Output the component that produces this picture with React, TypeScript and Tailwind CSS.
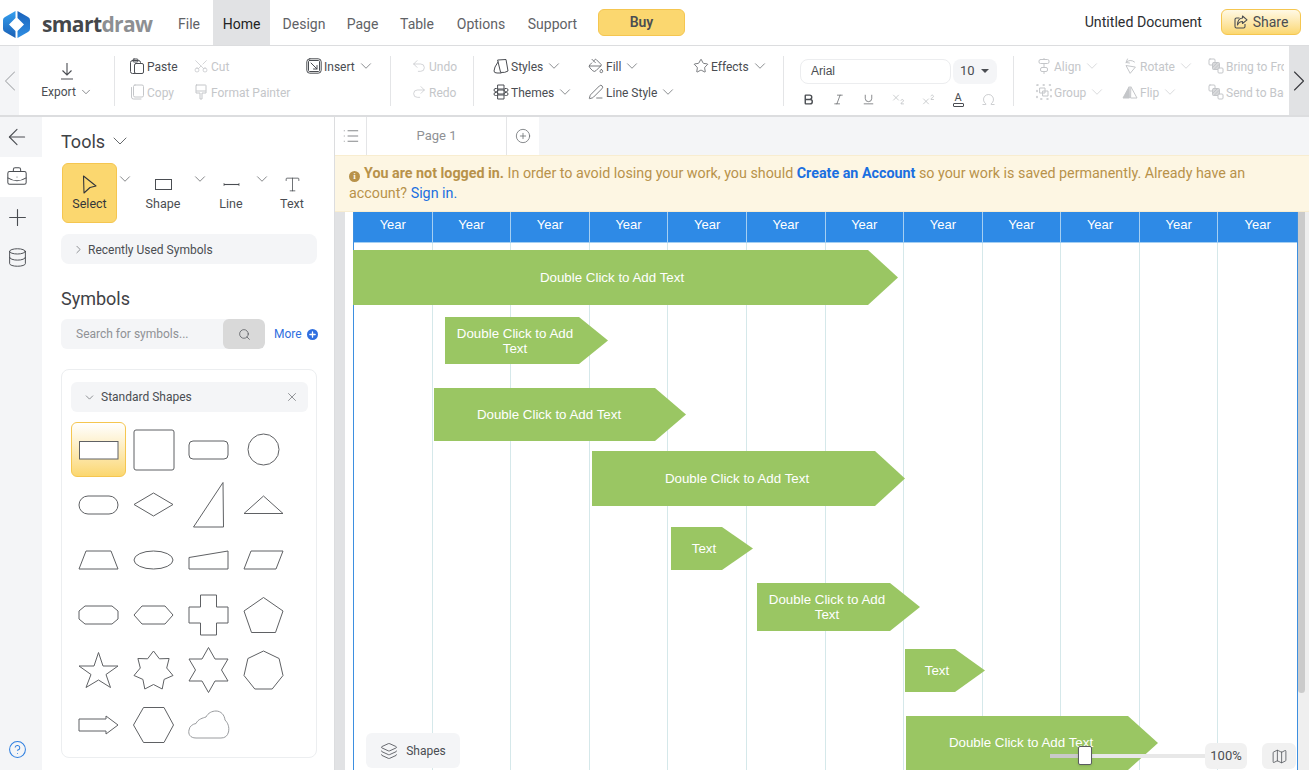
import type { ReactNode } from 'react';
import { ChevronDown, ChevronLeft, ChevronRight, Scissors, Undo2, Redo2, PaintBucket, Star, PenLine, Bold, Italic, Underline, Subscript, Superscript, Omega, ArrowLeft, BriefcaseBusiness, Plus, Database, CircleHelp, Type, Search, X, List, CirclePlus, Layers, Map } from 'lucide-react';

const font = { fontFamily: 'Roboto, sans-serif' };
const arial = { fontFamily: '"Liberation Sans", sans-serif' };

const menus = [
  { label: 'File', w: 'w-[48px]' },
  { label: 'Home', w: 'w-[57px]' },
  { label: 'Design', w: 'w-[68px]' },
  { label: 'Page', w: 'w-[49px]' },
  { label: 'Table', w: 'w-[60px]' },
  { label: 'Options', w: 'w-[68px]' },
  { label: 'Support', w: 'w-[75px]' },
];

function Logo() {
  return (
    <svg width="27" height="27" viewBox="0 0 27 27" className="shrink-0">
      <defs>
        <linearGradient id="logoLeft" x1="0" y1="0" x2="0" y2="1">
          <stop offset="0" stopColor="#35a0f0" />
          <stop offset="1" stopColor="#1a5fb4" />
        </linearGradient>
        <linearGradient id="logoRight" x1="0" y1="0" x2="0" y2="1">
          <stop offset="0" stopColor="#1a62ba" />
          <stop offset="1" stopColor="#2f8fe4" />
        </linearGradient>
      </defs>
      <path d="M12.5 0 L2 6 Q0 7 0 9 L0 18 Q0 20 2 21 L12.5 27 L12.5 20 L6 13.5 L12.5 7 Z" fill="url(#logoLeft)" />
      <path d="M14.5 0 L25 6 Q27 7 27 9 L27 18 Q27 20 25 21 L14.5 27 L14.5 20 L21 13.5 L14.5 7 Z" fill="url(#logoRight)" />
    </svg>
  );
}

function Ico({ children, size = 16 }: { children: ReactNode; size?: number }) {
  return (
    <svg width={size} height={size} viewBox="0 0 16 16" fill="none" stroke="currentColor" strokeWidth="1" strokeLinecap="round" strokeLinejoin="round">
      {children}
    </svg>
  );
}

const PasteIcon = <Ico><rect x="1.5" y="2.5" width="10" height="13" rx="2" /><rect x="4" y="1" width="5" height="3" rx="1" /><rect x="5.5" y="5.5" width="9" height="10" rx="1.5" fill="white" /></Ico>;
const CopyIcon = <Ico><rect x="4.5" y="1" width="10" height="12" rx="1.5" /><path d="M2.5 3.5 V13 Q2.5 15 4.5 15 H12" /></Ico>;
const PainterIcon = <Ico><rect x="3" y="1" width="10" height="6" rx="0.5" /><path d="M3 7 V9 H7 V15 H9 V9 H13 V7" /></Ico>;
const InsertIcon = <Ico><rect x="0.8" y="0.8" width="14.4" height="14.4" rx="3" /><rect x="2.5" y="2.5" width="11" height="11" rx="1" /><path d="M5 5 L11 11 M11 7.5 V11 H7.5" /></Ico>;
const StylesIcon = <Ico><path d="M5 2 L13 1.5 L15 13 Q12 15 8 14.5 Z" /><path d="M5 4 L2 9 L1 13 Q1 15 4 15 H8" /></Ico>;
const ThemesIcon = <Ico><rect x="5" y="1" width="6" height="4" /><rect x="5" y="6" width="6" height="4" /><rect x="5" y="11" width="6" height="4" /><rect x="1" y="4.5" width="4" height="3" rx="1.5" /><rect x="11" y="4.5" width="4" height="3" rx="1.5" /><rect x="1" y="8.5" width="4" height="3" rx="1.5" /><rect x="11" y="8.5" width="4" height="3" rx="1.5" /></Ico>;
const AlignIcon = <Ico><rect x="3" y="1.5" width="10" height="4" rx="1.5" /><rect x="4.5" y="9.5" width="7" height="4" rx="1.5" /><path d="M8 0.5 V1.5 M8 5.5 V9.5 M8 13.5 V15.5" /></Ico>;
const RotateIcon = <Ico><path d="M13 9 L4 7.5 L8 15 Z" /><path d="M4 4.5 Q8 0.5 12.5 4" /><path d="M5.5 1 L4 4.5 L7.5 5" /></Ico>;
const GroupIcon = <Ico><g strokeWidth="1.5" strokeDasharray="1 5.2"><rect x="1" y="1" width="14" height="14" /></g><rect x="4" y="4" width="5" height="5" /><rect x="7" y="7" width="5" height="5" /></Ico>;
const FlipIcon = <Ico><path d="M7 3 L1 14 H7 Z" fill="currentColor" /><path d="M9 3 L15 14 H9 Z" /></Ico>;
const StackIcon = <Ico><rect x="1" y="1" width="6" height="6" rx="1" /><rect x="4.5" y="4.5" width="7" height="7" rx="1" fill="#d8d9db" /><path d="M5 9 L9 5 M6.5 11 L11 6.5" /><rect x="10" y="10" width="5" height="5" rx="1" fill="white" /></Ico>;

function RibbonBtn({ icon, label, chevron, disabled, w }: { icon: ReactNode; label: string; chevron?: boolean; disabled?: boolean; w: string }) {
  return (
    <div className={`flex items-center h-[26px] gap-[1px] text-[12px] whitespace-nowrap overflow-hidden ${w} ${disabled ? 'text-[#c4c6c9]' : 'text-[#4a4d52]'}`}>
      <span className="w-[17px] flex justify-start shrink-0">{icon}</span>
      <span className="pt-[2px]">{label}</span>
      {chevron && <ChevronDown size={18} strokeWidth={0.85} className="ml-[1px] shrink-0" />}
    </div>
  );
}

function Divider() {
  return <div className="w-px h-[50px] bg-[#e4e5e7] shrink-0" />;
}

function Toolbar() {
  const s = 16;
  const sw = 1.1;
  return (
    <div className="flex items-stretch h-[71px] border-b-2 border-[#dcdddf] bg-white shrink-0">
      <div className="w-[19px] bg-[#f4f5f7] flex items-center justify-center text-[#a9abae] overflow-hidden">
        <ChevronLeft size={36} strokeWidth={0.7} className="shrink-0" />
      </div>
      <div className="flex-1 flex items-center min-w-0 overflow-hidden">
        <div className="w-[95px] flex flex-col items-center text-[#4a4d52] text-[12px] mt-[2px] pl-[1px]">
          <svg width="18" height="18" viewBox="0 0 18 18" fill="none" stroke="currentColor" strokeWidth="1.1" className="mb-[3px]"><path d="M9 1 V13 M4.5 8.5 L9 13 L13.5 8.5 M3 17 H15" /></svg>
          <div className="flex items-center gap-[3px] h-[18px]">Export <ChevronDown size={14} strokeWidth={1.1} /></div>
        </div>
        <Divider />
        <div className="w-[275px] grid grid-cols-[64px_113px_1fr] pl-[14px] -mt-[4px]">
          <RibbonBtn w="w-full" icon={PasteIcon} label="Paste" />
          <RibbonBtn w="w-full" disabled icon={<Scissors size={s} strokeWidth={sw} className="-rotate-90" />} label="Cut" />
          <RibbonBtn w="w-full" icon={InsertIcon} label="Insert" chevron />
          <RibbonBtn w="w-full" disabled icon={CopyIcon} label="Copy" />
          <RibbonBtn w="w-[120px]" disabled icon={PainterIcon} label="Format Painter" />
        </div>
        <Divider />
        <div className="w-[82px] flex flex-col pl-[20px] -mt-[4px]">
          <RibbonBtn w="w-full" disabled icon={<Undo2 size={s} strokeWidth={sw} />} label="Undo" />
          <RibbonBtn w="w-full" disabled icon={<Redo2 size={s} strokeWidth={sw} />} label="Redo" />
        </div>
        <Divider />
        <div className="w-[309px] grid grid-cols-[95px_105px_1fr] pl-[19px] -mt-[4px]">
          <RibbonBtn w="w-full" icon={StylesIcon} label="Styles" chevron />
          <RibbonBtn w="w-full" icon={<PaintBucket size={s} strokeWidth={sw} />} label="Fill" chevron />
          <RibbonBtn w="w-full" icon={<Star size={s} strokeWidth={sw} />} label="Effects" chevron />
          <RibbonBtn w="w-full" icon={ThemesIcon} label="Themes" chevron />
          <RibbonBtn w="w-full" icon={<PenLine size={s} strokeWidth={sw} />} label="Line Style" chevron />
        </div>
        <Divider />
        <div className="w-[229px] pl-[16px] pt-[4px] flex flex-col gap-[9px]">
          <div className="flex gap-[2px] h-[25px]">
            <div className="w-[151px] border border-[#ecedef] rounded-lg px-[10px] flex items-center text-[12px] text-[#4a4d52]" style={arial}>Arial</div>
            <div className="w-[44px] bg-[#f4f5f7] rounded-lg flex items-center pl-[7px] gap-[6px] text-[13px] text-[#4a4d52]">10 <span className="border-x-[4px] border-x-transparent border-t-[4px] border-t-[#4a4d52]" /></div>
          </div>
          <div className="flex items-center text-[#4a4d52] h-[14px]">
            <span className="w-[30px] flex justify-center -ml-[7px]"><Bold size={13} strokeWidth={2.6} /></span>
            <span className="w-[30px] flex justify-center"><Italic size={13} strokeWidth={1.2} /></span>
            <span className="w-[30px] flex justify-center"><Underline size={13} strokeWidth={1.2} /></span>
            <span className="w-[30px] flex justify-center text-[#b5b7ba]"><Subscript size={15} strokeWidth={1.1} /></span>
            <span className="w-[30px] flex justify-center text-[#b5b7ba]"><Superscript size={15} strokeWidth={1.1} /></span>
            <span className="w-[30px] flex flex-col items-center"><span className="text-[11px] leading-[10px]">A</span><span className="w-[11px] h-[4px] border border-[#4a4d52] rounded-[1px]" /></span>
            <span className="w-[30px] flex justify-center text-[#b5b7ba]"><Omega size={15} strokeWidth={1.1} /></span>
          </div>
        </div>
        <Divider />
        <div className="w-[275px] grid grid-cols-[86px_86px_1fr] pl-[22px] overflow-hidden -mt-[4px]">
          <RibbonBtn w="w-full" disabled icon={AlignIcon} label="Align" chevron />
          <RibbonBtn w="w-full" disabled icon={RotateIcon} label="Rotate" chevron />
          <RibbonBtn w="w-[76px]" disabled icon={StackIcon} label="Bring to Front" />
          <RibbonBtn w="w-full" disabled icon={GroupIcon} label="Group" chevron />
          <RibbonBtn w="w-full" disabled icon={FlipIcon} label="Flip" chevron />
          <RibbonBtn w="w-[76px]" disabled icon={StackIcon} label="Send to Back" />
        </div>
      </div>
      <div className="w-[20px] bg-[#e1e2e4] flex items-center justify-center text-[#3a3c40] overflow-hidden">
        <ChevronRight size={36} strokeWidth={0.75} className="shrink-0" />
      </div>
    </div>
  );
}

function Tool({ icon, label, w, inner, active, chevron }: { icon: ReactNode; label: string; w: string; inner: string; active?: boolean; chevron?: boolean }) {
  return (
    <div className={`relative ${w} h-[60px] shrink-0 text-[12.5px] ${active ? 'text-[#33363a]' : 'text-[#4a4d52]'}`}>
      <div className={`${inner} h-full flex flex-col items-center pt-[10px] ${active ? 'bg-[#fbd76f] border border-[#f5c650] rounded-md' : 'border border-transparent'}`}>
        <div className="h-[20px] flex items-center">{icon}</div>
        <div className="mt-[1px]">{label}</div>
      </div>
      {chevron && <ChevronDown size={18} strokeWidth={0.9} className="absolute -right-[3px] top-[7px] text-[#4a4d52]" />}
    </div>
  );
}

function starPoints(cx: number, cy: number, R: number, r: number, n: number) {
  const pts: string[] = [];
  const step = Math.PI / n;
  for (let i = 0; i < n * 2; i++) {
    const rad = i % 2 === 0 ? R : r;
    const a = -Math.PI / 2 + i * step;
    pts.push(`${(cx + rad * Math.cos(a)).toFixed(1)},${(cy + rad * Math.sin(a)).toFixed(1)}`);
  }
  return pts.join(' ');
}

const shapes: ReactNode[] = [
  <rect x="8.5" y="19.5" width="38.5" height="17.5" fill="white" />,
  <rect x="8" y="8" width="40" height="40" rx="2" />,
  <rect x="8" y="19" width="39" height="18" rx="4" />,
  <circle cx="27.5" cy="27.5" r="15.5" />,
  <rect x="8" y="19" width="39" height="18" rx="9" />,
  <polygon points="8,27.5 27.5,16 47,27.5 27.5,39" />,
  <polygon points="12.5,50 42,5.5 42.5,50" />,
  <polygon points="8,36.5 27.5,19 47,36.5" />,
  <polygon points="8,37 15,19 40,19 47,37" />,
  <ellipse cx="27.5" cy="28" rx="19.5" ry="9" />,
  <polygon points="8,25.5 47,19 47,37 8,37" />,
  <polygon points="8,37 15,19 47,19 40,37" />,
  <polygon points="8,24 14,19 41,19 47,24 47,32 41,37 14,37 8,32" />,
  <polygon points="8,28 16,19 39,19 47,28 39,37 16,37" />,
  <polygon points="19.5,8 35.5,8 35.5,20 47,20 47,36 35.5,36 35.5,48 19.5,48 19.5,36 8,36 8,20 19.5,20" />,
  <polygon points="27.5,10.5 47,24 39.5,45.5 15.5,45.5 8,24" />,
  <polygon points="27.5,10.5 32,24 47,24 35,32.5 39.5,45.5 27.5,38 15,45.5 20,32.5 8,24 23,24" />,
  <polygon points={starPoints(27.5, 29, 20, 13.5, 7)} />,
  <polygon points="27.5,5.5 34,17 47,17 40.5,28 47,39 34,39 27.5,50.5 21,39 8,39 14.5,28 8,17 21,17" />,
  <polygon points={starPoints(27.5, 29, 20, 18, 7).split(' ').filter((_, i) => i % 2 === 0).join(' ')} />,
  <polygon points="8,22 35,22 35,19 47,28 35,37 35,34 8,34" />,
  <polygon points="7.5,28 17.5,10.5 38,10.5 47.5,28 38,45.5 17.5,45.5" />,
  <path d="M15 41 C9 41 7 37 8 33 C8.5 29 12 27 15 26.5 C17 22 22 21 25 20 C27 16 31 14 35 14 C40 14 43.5 18 44 23 C47 26 48.5 30 47.5 35 C46.5 39 44 41 40 41 Z" stroke="#9a9c9f" />,
];

function ShapeGrid() {
  return (
    <div className="grid grid-cols-4 w-[220px] mt-[10px]">
      {shapes.map((shape, i) => (
        <div key={i} className={`w-[55px] h-[55px] ${i === 0 ? 'rounded-md border border-[#f5c650] bg-gradient-to-b from-white to-[#fbd76f]' : ''}`}>
          <svg width="55" height="55" viewBox="0 0 55 55" className={i === 0 ? '-m-px' : ''} fill="none" stroke="#5f6164" strokeWidth="1">
            {shape}
          </svg>
        </div>
      ))}
    </div>
  );
}

function LeftPanel() {
  return (
    <div className="flex shrink-0 w-[335px] border-r border-[#dcdddf]">
      <div className="w-[42px] shrink-0 bg-[#f4f5f7] flex flex-col items-start text-[#4a4d52]">
        <div className="h-[40px] w-[34px] flex items-center justify-center"><ArrowLeft size={26} strokeWidth={1} /></div>
        <div className="h-[40px] w-full bg-white flex items-center"><span className="w-[34px] flex justify-center"><BriefcaseBusiness size={22} strokeWidth={1.1} /></span></div>
        <div className="h-[40px] w-[34px] flex items-center justify-center"><Plus size={27} strokeWidth={1} /></div>
        <div className="h-[40px] w-[34px] flex items-center justify-center"><Database size={21} strokeWidth={1.1} /></div>
        <div className="mt-auto mb-[11px] w-[34px] flex justify-center"><CircleHelp size={19} strokeWidth={1.3} className="text-[#2f7fe0]" /></div>
      </div>
      <div className="flex-1 min-w-0 pl-[19px] text-[#4a4d52]">
        <div className="flex items-center gap-[3px] h-[24px] mt-[12px] text-[18px] text-[#3f4246]">Tools <ChevronDown size={24} strokeWidth={0.8} /></div>
        <div className="flex mt-[10px] pl-[1px]">
          <Tool w="w-[69px]" inner="w-[55px]" active chevron icon={<svg width="15" height="19" viewBox="0 0 15 19" fill="none" stroke="currentColor" strokeWidth="1.1" strokeLinejoin="round"><polygon points="1.5,1 14,11 8,12.5 2,18" /></svg>} label="Select" />
          <Tool w="w-[75px]" inner="w-[64px]" chevron icon={<span className="block w-[17px] h-[11px] border-[1.5px] border-[#4a4d52]" />} label="Shape" />
          <Tool w="w-[62px]" inner="w-[50px]" chevron icon={<svg width="17" height="5" viewBox="0 0 17 5" stroke="currentColor"><path d="M1 2.5 H16" strokeWidth="1.1" /><path d="M1 1 V4 M16 1 V4" strokeWidth="0.7" /></svg>} label="Line" />
          <Tool w="w-[48px]" inner="w-[48px]" icon={<Type size={19} strokeWidth={1} />} label="Text" />
        </div>
        <div className="mt-[11px] h-[30px] bg-[#f4f5f7] rounded-lg flex items-center pl-[11px] gap-[3px] pt-[1px] text-[12px] w-[256px]">
          <ChevronRight size={13} strokeWidth={1.1} /> Recently Used Symbols
        </div>
        <div className="mt-[23px] text-[18px] leading-[24px] text-[#3f4246]">Symbols</div>
        <div className="mt-[8px] flex items-center">
          <div className="w-[204px] h-[30px] bg-[#f4f5f7] rounded-md flex items-center justify-between overflow-hidden">
            <span className="pl-[15px] text-[12px] text-[#8f9195]">Search for symbols...</span>
            <span className="w-[42px] h-full bg-[#d9d9d9] rounded-md flex items-center justify-center"><Search size={13} strokeWidth={1.3} /></span>
          </div>
          <span className="ml-[9px] text-[12px] text-[#2f6fe0]">More</span>
          <span className="ml-[5px] w-[11px] h-[11px] rounded-full bg-[#2f6fe0] flex items-center justify-center"><Plus size={9} strokeWidth={3.5} className="text-white" /></span>
        </div>
        <div className="mt-[20px] w-[256px] h-[389px] border border-[#eceef0] rounded-lg pt-[12px] pl-[9px]">
          <div className="h-[30px] w-[237px] bg-[#f4f5f7] rounded-md flex items-center pl-[12px] text-[12px] gap-[5px]">
            <ChevronDown size={13} strokeWidth={1.1} /> Standard Shapes
            <X size={14} strokeWidth={1} className="ml-auto mr-[9px]" />
          </div>
          <ShapeGrid />
        </div>
      </div>
    </div>
  );
}

const arrows = [
  { left: 18, top: 38, w: 545, h: 55, head: 30, text: 'Double Click to Add Text', cx: 259 },
  { left: 110, top: 105, w: 163, h: 47, head: 29, text: 'Double Click to Add Text', cx: 70, tw: 'w-[125px]' },
  { left: 99, top: 176, w: 252, h: 53, head: 31, text: 'Double Click to Add Text', cx: 115 },
  { left: 257, top: 239, w: 313, h: 55, head: 30, text: 'Double Click to Add Text', cx: 145 },
  { left: 336, top: 315, w: 82, h: 43, head: 31, text: 'Text', cx: 33 },
  { left: 422, top: 371, w: 163, h: 48, head: 30, text: 'Double Click to Add Text', cx: 70, tw: 'w-[125px]' },
  { left: 570, top: 437, w: 80, h: 43, head: 30, text: 'Text', cx: 32 },
  { left: 571, top: 504, w: 252, h: 54, head: 30, text: 'Double Click to Add Text', cx: 115 },
];

function Canvas() {
  return (
    <div className="relative flex-1 min-h-0 overflow-hidden bg-white flex">
      <div className="w-[10px] bg-[#e1e2e4] shrink-0" />
      <div className="w-[8px] shrink-0" />
      <div className="w-[945px] shrink-0 border-x border-x-[#3d8fe0] flex flex-col">
        <div className="grid grid-cols-12 h-[30px] bg-[#2e8ae6] text-white text-[13px] font-medium shrink-0" style={arial}>
          {Array.from({ length: 12 }).map((_, i) => (
            <div key={i} className="flex items-center justify-center border-r border-[#a5cff2] last:border-r-0 pb-[4px]">Year</div>
          ))}
        </div>
        <div className="grid grid-cols-12 flex-1 border-t border-[#a5cff2]">
          {Array.from({ length: 12 }).map((_, i) => (
            <div key={i} className="border-r border-[#d5e8ea] last:border-r-0" />
          ))}
        </div>
      </div>
      <div className="flex-1 bg-[#efefef]">
        <div className="w-[7px] h-[481px] rounded-b-full bg-[#cbcbcb]" />
      </div>

      {arrows.map((a, i) => (
        <div key={i} className="absolute text-white text-[13.33px]" style={{ left: a.left, top: a.top, width: a.w, height: a.h, ...arial }}>
          <svg width={a.w} height={a.h} className="absolute inset-0">
            <polygon points={`0,0 ${a.w - a.head},0 ${a.w},${a.h / 2} ${a.w - a.head},${a.h} 0,${a.h}`} fill="#9ac663" />
          </svg>
          <span className={`absolute -translate-x-1/2 -translate-y-1/2 top-1/2 text-center leading-[15px] ${a.tw ?? '-mt-[1px] whitespace-nowrap'}`} style={{ left: a.cx }}>{a.text}</span>
        </div>
      ))}

      <div className="absolute left-[31px] bottom-[2px] w-[94px] h-[35px] bg-[#f4f5f7] rounded-md flex items-center justify-center gap-[8px] text-[12px] text-[#4a4d52]">
        <Layers size={18} strokeWidth={1.1} /> Shapes
      </div>
      <div className="absolute left-[715px] bottom-[12px] w-[155px] h-[4px] bg-[#e8e8e8]">
        <div className="w-[28px] h-full bg-[#c9c9c9]" />
      </div>
      <div className="absolute left-[743px] bottom-[5px] w-[14px] h-[19px] bg-white border border-[#5a5c60] rounded-[2px] shadow" />
      <div className="absolute left-[870px] bottom-[1px] w-[42px] h-[26px] bg-[#f1f1f1] rounded-md flex items-center justify-center text-[13px] text-[#4a4d52]">100%</div>
      <div className="absolute left-[927px] bottom-[1px] w-[34px] h-[26px] bg-[#f1f1f1] rounded-md flex items-center justify-center text-[#4a4d52]"><Map size={17} strokeWidth={1.1} /></div>
    </div>
  );
}

export default function App() {
  return (
    <div className="w-[1309px] h-[770px] overflow-hidden flex flex-col bg-white" style={font}>
      <div className="h-[45px] flex items-center shrink-0 bg-white">
        <div className="flex items-center w-[165px] pl-[3px] gap-[12px] pt-[4px]">
          <Logo />
          <span className="text-[21px] font-bold tracking-[-0.6px] leading-none" style={{ fontFamily: '"Open Sans", sans-serif' }}>
            <span className="text-[#45474a]">smart</span><span className="text-[#8d8f92]">draw</span>
          </span>
        </div>
        <div className="flex h-full">
          {menus.map((m) => (
            <div key={m.label} className={`${m.w} h-full flex items-center justify-center pt-[4px] text-[14px] ${m.label === 'Home' ? 'bg-[#e1e2e4] text-[#222]' : 'text-[#5f6266]'}`}>{m.label}</div>
          ))}
        </div>
        <div className="ml-[8px] w-[87px] h-[27px] bg-[#fbd76f] border border-[#f5c650] rounded-md flex items-center justify-center text-[14px] font-semibold text-[#4a4d52] -mt-[1px]">Buy</div>
        <div className="ml-auto text-[14.2px] text-[#2c2e31]">Untitled Document</div>
        <div className="ml-[19px] mr-[8px] w-[80px] h-[26px] bg-gradient-to-b from-[#fff9e5] to-[#fbd76f] border border-[#f5c650] rounded-md flex items-center justify-center gap-[5px] text-[14px] text-[#4a4d52] -mt-[1px]">
          <svg width="14" height="14" viewBox="0 0 14 14" fill="none" stroke="currentColor" strokeWidth="1.1" strokeLinejoin="round"><path d="M5.5 3 H2.5 Q1 3 1 4.5 V11.5 Q1 13 2.5 13 H9.5 Q11 13 11 11.5 V9" /><path d="M8.5 1 L13 4.8 L8.5 8.5 V6.5 Q5 6.5 3.5 10 Q3.5 3.5 8.5 3 Z" /></svg>
          Share
        </div>
      </div>
      <div className="border-t border-[#dcdddf]" />
      <Toolbar />
      <div className="flex flex-1 min-h-0">
        <LeftPanel />
        <div className="flex-1 min-w-0 flex flex-col">
          <div className="h-[38px] flex bg-[#f4f5f7] shrink-0 text-[#6b6e72]">
            <div className="w-[32px] bg-white border-r border-[#e4e5e7] flex items-center justify-center"><List size={18} strokeWidth={1.1} /></div>
            <div className="w-[140px] bg-white border-r border-[#e4e5e7] flex items-center justify-center text-[13px] text-[#8f9195]">Page 1</div>
            <div className="w-[32px] bg-white flex items-center justify-center"><CirclePlus size={16} strokeWidth={1.2} /></div>
          </div>
          <div className="h-[57px] bg-[#fdf6e3] border-y border-[#f8edd0] pl-[14px] pr-[40px] pt-[7px] text-[14.3px] leading-[20px] text-[#b8924a] shrink-0">
            <span className="inline-flex items-center justify-center w-[11px] h-[11px] mr-[4px] rounded-full bg-[#b8924a] text-[#fdf6e3] text-[9px] font-bold leading-none align-[-1px]" style={{ fontFamily: '"Liberation Serif", serif' }}>i</span>
            <b>You are not logged in.</b> In order to avoid losing your work, you should <b className="text-[#1a6fe0]">Create an Account</b> so your work is saved permanently. Already have an account? <span className="text-[#1a6fe0]">Sign in.</span>
          </div>
          <Canvas />
        </div>
      </div>
    </div>
  );
}
